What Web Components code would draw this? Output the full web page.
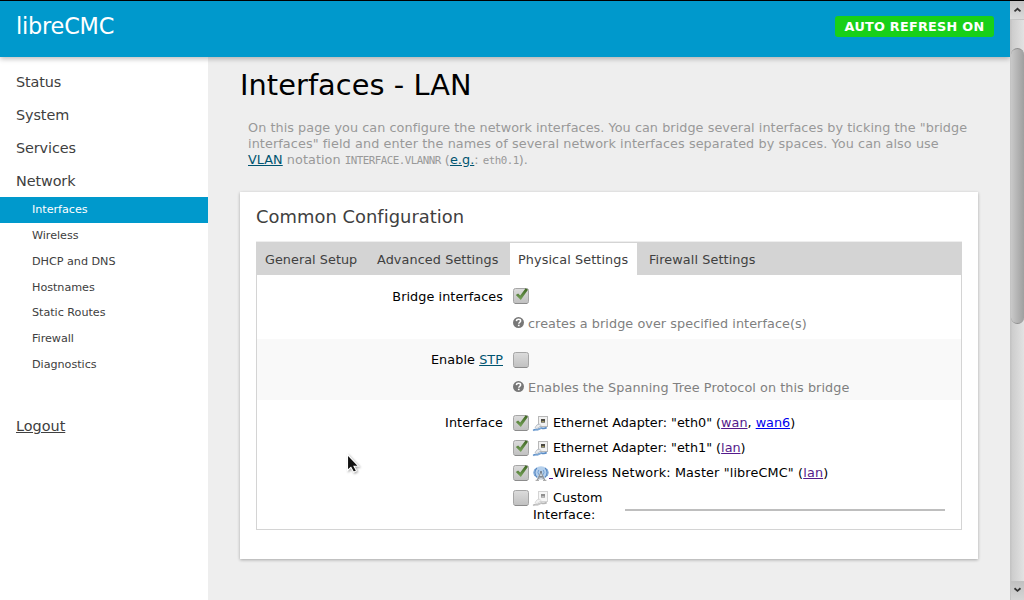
<!DOCTYPE html>
<html lang="en">
<head>
<meta charset="utf-8">
<title>libreCMC - Interfaces - LAN</title>
<style>
html, body { margin: 0; height: 100%; overflow: hidden; }
body { font: 12.8px/16px "DejaVu Sans", sans-serif; color: #000; background: #eee; }
a { color: #551a8b; text-decoration: underline; }
a.fresh { color: #0000ee; }
abbr { color: #005470; text-decoration: underline; }
code { font: 10.8px/16px "DejaVu Sans Mono", monospace; letter-spacing: -.5px; }
.wide { letter-spacing: .09px; }
</style>
</head>
<body>
<app-window>
  <app-header slot="header" brand="libreCMC">Auto Refresh on</app-header>
  <side-nav slot="nav">
    <nav-item>Status</nav-item>
    <nav-item>System</nav-item>
    <nav-item>Services</nav-item>
    <nav-item>Network</nav-item>
    <nav-item sub active>Interfaces</nav-item>
    <nav-item sub>Wireless</nav-item>
    <nav-item sub>DHCP and DNS</nav-item>
    <nav-item sub>Hostnames</nav-item>
    <nav-item sub>Static Routes</nav-item>
    <nav-item sub>Firewall</nav-item>
    <nav-item sub>Diagnostics</nav-item>
    <nav-item logout>Logout</nav-item>
  </side-nav>
  <page-intro heading="Interfaces - LAN">On this page you can configure the network interfaces. You can bridge several interfaces by ticking the "bridge<br><span class="wide">interfaces" field and enter the names of several network interfaces separated by spaces. You can also use</span><br><abbr>VLAN</abbr> notation <code>INTERFACE.VLANNR</code> (<abbr>e.g.</abbr>: <code>eth0.1</code>).</page-intro>
  <config-card heading="Common Configuration">
    <tab-label slot="tabs" style="--w:113px">General Setup</tab-label>
    <tab-label slot="tabs" style="--w:141px">Advanced Settings</tab-label>
    <tab-label slot="tabs" style="--w:127px" active>Physical Settings</tab-label>
    <tab-label slot="tabs" style="--w:140px;--pad:12px">Firewall Settings</tab-label>
    <form-row style="--h:64px;--drop:1px"><span slot="label">Bridge interfaces</span>
      <check-box checked></check-box><help-text>creates a bridge over specified interface(s)</help-text></form-row>
    <form-row alt style="--h:61px"><span slot="label">Enable <abbr>STP</abbr></span>
      <check-box></check-box><help-text>Enables the Spanning Tree Protocol on this bridge</help-text></form-row>
    <form-row style="--h:129px;--top:15px"><span slot="label">Interface</span>
      <iface-option checked kind="ethernet">Ethernet Adapter: "eth0" (<a>wan</a>, <a class="fresh">wan6</a>)</iface-option>
      <iface-option checked kind="ethernet">Ethernet Adapter: "eth1" (<a>lan</a>)</iface-option>
      <iface-option checked kind="wifi">Wireless Network: Master "libreCMC" (<a>lan</a>)</iface-option>
      <custom-iface></custom-iface>
    </form-row>
  </config-card>
  <scroll-bar slot="scroll"></scroll-bar>
</app-window>
<mouse-pointer></mouse-pointer>
<script>
const define = (name, html, setup) => customElements.define(name, class extends HTMLElement {
  constructor() {
    super();
    this.attachShadow({ mode: 'open' }).innerHTML = html;
  }
  connectedCallback() { if (setup) setup(this, this.shadowRoot); }
});

define('app-window', `<style>
:host { display: grid; grid-template: 1px 56px 543px / 208px 802px 14px; height: 600px; width: 1024px; }
.edge { grid-area: 1/1/2/4; background: #000; }
.head { grid-area: 2/1/3/3; z-index: 2; }
.nav { grid-area: 3/1/4/2; background: #fff; }
main { grid-area: 3/2/4/3; background: #eee; padding: 10px 32px 0; overflow: hidden; }
.scroll { grid-area: 2/3/4/4; z-index: 3; }
.head, .scroll { display: grid; }
</style><div class="edge"></div><div class="head"><slot name="header"></slot></div><div class="nav"><slot name="nav"></slot></div><main><slot></slot></main><div class="scroll"><slot name="scroll"></slot></div>`);

define('app-header', `<style>
:host { display: flex; justify-content: space-between; align-items: flex-start; background: #0099cc; color: #fff; box-shadow: 0 2px 5px rgba(0,0,0,.26); padding: 0 16px; }
.brand { font-size: 22.4px; line-height: 30px; padding-top: 10px; letter-spacing: -.2px; }
.badge { margin-top: 15px; box-sizing: border-box; width: 159px; height: 21px; line-height: 21px; text-align: center; border-radius: 3px; background: #18d018; font-weight: bold; text-transform: uppercase; letter-spacing: .26px; white-space: nowrap; }
</style><span class="brand"></span><span class="badge"><slot></slot></span>`, (h, r) => { r.querySelector('.brand').textContent = h.getAttribute('brand'); });

define('side-nav', `<style>:host { display: flex; flex-direction: column; padding-top: 8px; }</style><slot></slot>`);

define('nav-item', `<style>
:host { display: block; height: 33px; line-height: 35px; padding-left: 16px; font-size: 14.4px; letter-spacing: -.1px; color: #404040; white-space: nowrap; }
:host([sub]) { height: 25.85px; line-height: 25px; padding-left: 32px; font-size: 11.2px; letter-spacing: -.03px; }
:host([sub]:nth-of-type(9)) { line-height: 26.4px; }
:host([active]) { background: #0099cc; color: #fff; }
:host([logout]) { text-decoration: underline; margin-top: 31px; letter-spacing: 0; }
</style><slot></slot>`);

define('page-intro', `<style>
:host { display: block; height: 125px; }
h2 { margin: 0; font-size: 28.8px; line-height: 36px; font-weight: 400; letter-spacing: .06px; white-space: nowrap; }
p { margin: 17px 0 0; padding-left: 8px; color: #999; line-height: 16px; letter-spacing: .055px; white-space: nowrap; }
</style><h2></h2><p><slot></slot></p>`, (h, r) => { r.querySelector('h2').textContent = h.getAttribute('heading'); });

define('config-card', `<style>
:host { display: block; box-sizing: border-box; height: 367px; background: #fff; padding: 12px 16px 0; box-shadow: 0 1px 3px rgba(0,0,0,.3); }
h3 { margin: 0; height: 37px; font-size: 17.9px; line-height: 26px; font-weight: 400; letter-spacing: .03px; color: #404040; }
.tabs { display: flex; height: 32px; background: #d4d4d4; border-top: 1px solid #d4d4d4; box-shadow: 0 -1px #eee; margin-top: 1px; }
.body { border: 1px solid #d4d4d4; border-top: 0; }
</style><h3></h3><div class="tabs"><slot name="tabs"></slot></div><div class="body"><slot></slot></div>`, (h, r) => { r.querySelector('h3').textContent = h.getAttribute('heading'); });

define('tab-label', `<style>
:host { display: block; box-sizing: border-box; width: var(--w); height: 32px; padding-left: var(--pad, 8px); line-height: 34px; letter-spacing: .1px; color: #404040; white-space: nowrap; }
:host(:first-of-type) { padding-left: 9px; letter-spacing: .04px; }
:host([active]) { background: #fff; }
</style><slot></slot>`);

define('form-row', `<style>
:host { display: grid; grid-template-columns: 246px 1fr; column-gap: 10px; box-sizing: border-box; height: var(--h); padding-top: var(--top, 13px); }
:host([alt]) { background: #f9f9f9; }
.label { text-align: right; line-height: 16px; padding-top: var(--drop, 0); letter-spacing: .07px; white-space: nowrap; }
.field { display: flex; flex-direction: column; align-items: flex-start; }
</style><div class="label"><slot name="label"></slot></div><div class="field"><slot></slot></div>`);

define('check-box', `<style>
:host { display: block; width: 16px; height: 16px; }
svg { display: block; overflow: visible; }
path { display: none; }
:host([checked]) path { display: block; }
</style><svg width="16" height="16" viewBox="0 0 16 16"><defs><linearGradient id="g" x2="0" y2="1"><stop stop-color="#dcdcdc"/><stop offset="1" stop-color="#c0c0c0"/></linearGradient><linearGradient id="t" x2="0" y2="1"><stop stop-color="#3c6420"/><stop offset="1" stop-color="#78a45c"/></linearGradient></defs>
<rect x=".5" y=".5" width="15" height="15" rx="2" fill="url(#g)" stroke="#a6a6a6"/><path d="M2 15.5h12" style="display:block" stroke="#8c8c8c"/><path d="M2.8 7l2.3-1.6 2.1 2.2L12.7.2l2.3 1.5L7.8 12z" fill="url(#t)"/></svg>`);

define('help-text', `<style>
:host { display: flex; gap: 4px; align-items: flex-start; margin-top: 12px; line-height: 16px; letter-spacing: .06px; color: #808080; white-space: nowrap; }
svg { display: block; }
</style><svg width="11" height="13" viewBox="0 -.6 11 13"><circle cx="5.5" cy="6" r="5.5" fill="#777"/><path d="M3.4 4.5C3.5 3.2 4.4 2.7 5.6 2.7c1.2 0 2 .7 2 1.6 0 1.3-1.7 1.4-1.8 2.9" fill="none" stroke="#fff" stroke-width="1.5"/><rect x="4.9" y="8.1" width="1.7" height="1.5" fill="#fff"/></svg><span><slot></slot></span>`);

const ethernet = `<rect x="5.5" y=".5" width="9" height="10" fill="#f1f1f1" stroke="#b8b8b8"/><rect x="8" y="3" width="4" height="3.6" fill="#4a4842"/><path d="M8.6 5.5h2.8" stroke="#b5ae6a" stroke-width=".8"/><path d="M.3 14.6c1.6-1.8 3.3-.4 4.9-1.1 1.5-.9 2.3-1.6 3.5-1.4 1.4.3 2.6 1 5-.5" fill="none" stroke="#5a8cc6" stroke-width="1.8"/><path d="M1 14.7c1.5-1.4 2.8-.2 4.2-1.1 1.4-1 2.1-1.5 3.3-1.3" fill="none" stroke="#a8caea" stroke-width=".6"/><path d="M2 11.6l2-2.8 2.6-.7 1.2 1.4-1.8 2.1-2.4 1z" fill="#e9ebee" stroke="#a9b0b9" stroke-width=".7"/>`;
const wifi = `<ellipse cx="8" cy="6.6" rx="7.5" ry="6.3" fill="#b5d0ec"/><path d="M3.9 2a6.2 6.2 0 0 0 0 9.2M12.1 2a6.2 6.2 0 0 1 0 9.2" fill="none" stroke="#5585c0" stroke-width="1.2"/><path d="M1.7 3.2a7 7 0 0 0 0 6.9M14.3 3.2a7 7 0 0 1 0 6.9" fill="none" stroke="#7ea8d8" stroke-width=".9"/><path d="M5.8 3.9a4 4 0 0 0 0 4.8M10.2 3.9a4 4 0 0 1 0 4.8" fill="none" stroke="#6c98ce" stroke-width=".9"/><path d="M8 6.2L3.9 14h8.2z" fill="#d5d9de" fill-opacity=".8"/><path d="M7.8 6.5L4.2 14M8.2 6.5l3.6 7.5M6 10.5h4M5.2 12.8l4-2.8M10.8 12.8L6.8 10" fill="none" stroke="#84898f" stroke-width=".9"/><circle cx="8" cy="5.9" r="1" fill="#69717b"/><path d="M2.6 14.3h3.4M10 14.3h3.4" stroke="#999"/>`;

define('iface-option', `<style>
:host { display: flex; height: 25px; line-height: 16px; white-space: nowrap; }
:host([kind=wifi]) { letter-spacing: .14px; }
svg { display: block; margin: 1px 0 0 4px; overflow: visible; }
.gap { width: 4px; }
:host([kind=wifi]) .gap { color: #551a8b; border-bottom: 1px solid; height: 13px; }
</style><check-box></check-box><svg width="16" height="16" viewBox="0 0 16 16"></svg><span class="gap"></span><span><slot></slot></span>`, (h, r) => {
  r.querySelector('svg').innerHTML = h.getAttribute('kind') === 'wifi' ? wifi : ethernet;
  if (h.hasAttribute('checked')) r.querySelector('check-box').setAttribute('checked', '');
});

define('custom-iface', `<style>
:host { display: flex; line-height: 17px; letter-spacing: .08px; white-space: nowrap; }
.text { width: 92px; margin: -1px 0 0 4px; }
.first { display: flex; gap: 4px; height: 17px; }
svg { display: block; margin-top: 2px; opacity: .6; filter: grayscale(1); overflow: visible; }
.line { box-sizing: border-box; width: 320px; height: 21px; border: 0; border-bottom: 2px solid #bebebe; padding: 0; background: transparent; font: inherit; outline: 0; border-radius: 0; }
</style><check-box></check-box><div class="text"><div class="first"><svg width="16" height="16" viewBox="0 0 16 16">${ethernet}</svg><span>Custom</span></div><div>Interface:</div></div><input class="line">`);

define('scroll-bar', `<style>
:host { display: flex; flex-direction: column; background: linear-gradient(90deg, #c4c4c4 0 1px, #cdcdcd 2px, #e2e2e2); }
.btn { height: 18px; flex: none; background: linear-gradient(#c4c4c4, #dadada); border-bottom: 1px solid #c5c5c5; }
.btn svg { display: block; }
.thumb { box-sizing: border-box; height: 276px; margin: 28px 0 0 1px; border: 1px solid #8e8e8e; border-width: 1px 0; border-radius: 7px; background: linear-gradient(90deg, #c9c9c9, #9f9f9f); }
.down { margin-top: auto; border: 0; height: 19px; background: linear-gradient(#c0c0c0, #d6d6d6); margin-left: 1px; }
</style><div class="btn"><svg width="14" height="18"><path d="M4.5 10.4l3-2.6 3 2.6" fill="none" stroke="#333" stroke-width="1.8"/></svg></div><div class="thumb"></div><div class="btn down"><svg width="13" height="19"><path d="M3.5 7.3l3 2.6 3-2.6" fill="none" stroke="#333" stroke-width="1.8"/></svg></div>`);

define('mouse-pointer', `<style>
:host { position: absolute; left: 346px; top: 453px; z-index: 9; filter: drop-shadow(1px 1px 1px rgba(0,0,0,.35)); }
svg { display: block; }
</style><svg width="15" height="22" viewBox="0 0 15 22"><path d="M1.5 1.5v16l3.4-3.2 2.7 5 2.9-1.5-2.5-4.6h4.6z" fill="#111" stroke="#fff" stroke-width="1.1"/></svg>`);
</script>
</body>
</html>
